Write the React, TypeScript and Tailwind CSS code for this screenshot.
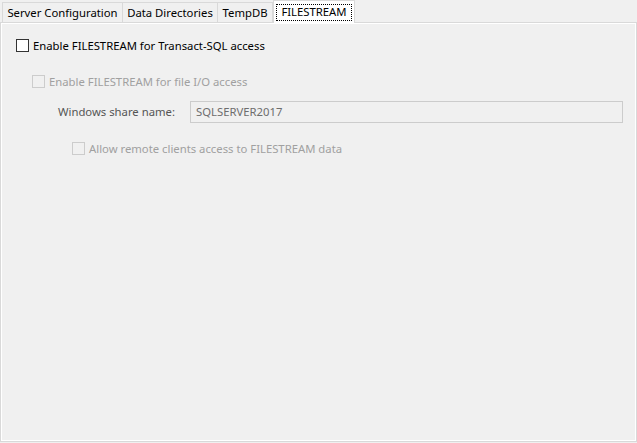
const tabs = [
  { label: "Server Configuration", width: "w-[121px]" },
  { label: "Data Directories", width: "w-[96px]" },
  { label: "TempDB", width: "w-[56px]" },
];

const CheckBox: React.FC<{ disabled?: boolean }> = ({ disabled }) => (
  <span
    className={
      disabled
        ? "block w-[13px] h-[13px] border border-[#cccccc] bg-[#f0f0f0] shrink-0"
        : "block w-[13px] h-[13px] border border-[#333333] bg-white shrink-0"
    }
  />
);

const App: React.FC = () => {
  return (
    <div
      className="w-[637px] h-[443px] bg-[#f0f0f0] flex flex-col text-[11.3px] leading-none"
      style={{ fontFamily: '"Noto Sans", "Open Sans", sans-serif' }}
    >
      <div className="h-[22px] flex items-end pl-[2px]">
        {tabs.map((t, i) => (
          <div
            key={t.label}
            className={`${t.width} h-[20px] border border-b-0 border-[#d9d9d9] ${
              i > 0 ? "-ml-px" : ""
            } flex items-center justify-center text-black`}
          >
            {t.label}
          </div>
        ))}
        <div className="w-[82px] h-[23px] -mb-px relative z-10 bg-white border border-b-0 border-[#d9d9d9] flex items-center justify-center px-[2px]">
          <span className="border border-dotted border-black px-[2px] h-[17px] flex items-center w-full justify-center text-black">
            FILESTREAM
          </span>
        </div>
      </div>
      <div className="h-[420px] border border-[#d9d9d9]">
        <div className="h-full border border-white pl-[14px] pt-[15px]">
          <label className="flex items-center gap-[4px] text-black">
            <CheckBox />
            <span>Enable FILESTREAM for Transact-SQL access</span>
          </label>
          <div className="pl-[16px] mt-[23px]">
            <label className="flex items-center gap-[4px] text-[#a0a0a0]">
              <CheckBox disabled />
              <span>Enable FILESTREAM for file I/O access</span>
            </label>
            <div className="flex items-center mt-[13px] pl-[26px]">
              <span className="w-[132px] text-[#555555]">Windows share name:</span>
              <div className="w-[433px] h-[22px] border border-[#cccccc] bg-[#f0f0f0] flex items-center pl-[5px] text-[#6d6d6d]">
                SQLSERVER2017
              </div>
            </div>
            <label className="flex items-center gap-[4px] text-[#a0a0a0] mt-[19px] pl-[40px]">
              <CheckBox disabled />
              <span>Allow remote clients access to FILESTREAM data</span>
            </label>
          </div>
        </div>
      </div>
    </div>
  );
};

export default App;
